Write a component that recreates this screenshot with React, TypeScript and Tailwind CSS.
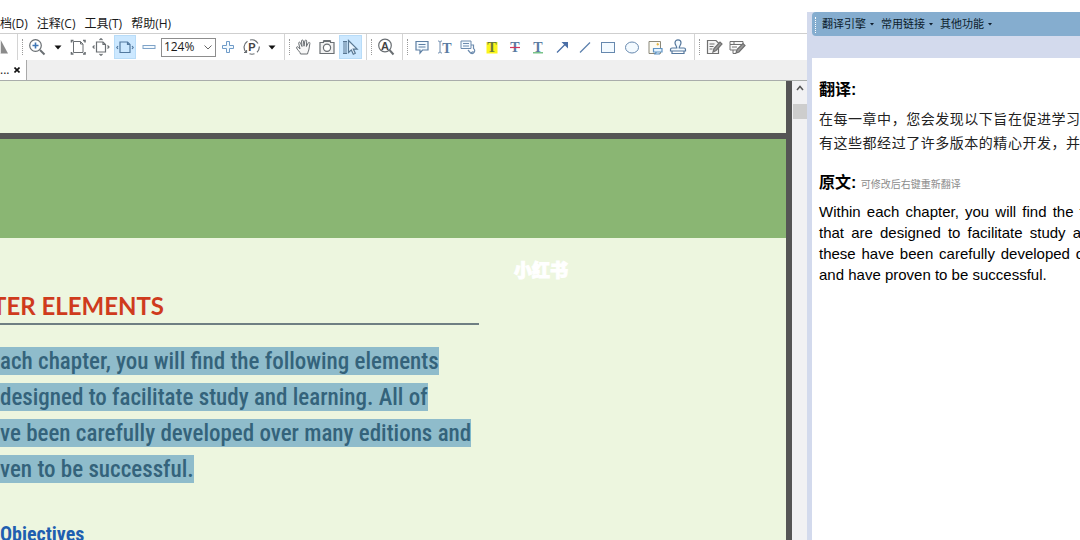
import type { ReactNode } from 'react'

const menus = ['文档(D)', '注释(C)', '工具(T)', '帮助(H)']
const translatorMenus = ['翻译引擎', '常用链接', '其他功能']
const translatedLines = ['在每一章中，您会发现以下旨在促进学习', '有这些都经过了许多版本的精心开发，并']
const selectedLines = [
  'ach chapter, you will find the following elements',
  'designed to facilitate study and learning. All of',
  've been carefully developed over many editions and',
  'ven to be successful.',
]

interface IconProps {
  children: ReactNode
  color?: string
}

function Icon({ children, color = '#6a6f73' }: IconProps) {
  return (
    <svg viewBox="0 0 18 18" className="size-[18px] shrink-0" fill="none" stroke={color} strokeWidth="1.2" aria-hidden="true">
      {children}
    </svg>
  )
}

interface LetterProps {
  children: string
  x?: number
  y?: number
  size?: number
  color?: string
}

function Letter({ children, x = 9, y = 14, size = 14, color = '#5a7ba2' }: LetterProps) {
  return (
    <text x={x} y={y} fontSize={size} textAnchor="middle" fill={color} stroke="none" fontWeight="700" fontFamily="Liberation Serif, serif">
      {children}
    </text>
  )
}

interface ToolProps {
  label: string
  active?: boolean
  children: ReactNode
}

function Tool({ label, active, children }: ToolProps) {
  return (
    <button
      type="button"
      aria-label={label}
      title={label}
      className={active ? 'flex h-6 flex-1 items-center justify-center bg-[#cce8ff] outline outline-[#b8dcf8] -outline-offset-1' : 'flex h-6 flex-1 items-center justify-center'}
    >
      {children}
    </button>
  )
}

function Caret({ label }: { label: string }) {
  return (
    <button type="button" aria-label={label} className="flex h-6 w-4 items-center justify-center">
      <svg viewBox="0 0 8 5" className="h-[5px] w-2" fill="#111"><path d="M0.5 0.5h7L4 4.5z" /></svg>
    </button>
  )
}

function Group({ children, className, last }: { children: ReactNode; className: string; last?: boolean }) {
  return (
    <div className={`flex h-full shrink-0 items-center px-1 ${className} ${last ? '' : 'border-r border-[#d4d4d4]'}`}>
      <span className="mr-0.5 h-4 border-l border-dotted border-[#9a9a9a]" />
      {children}
    </div>
  )
}

function Toolbar() {
  return (
    <div className="flex h-[27px] items-center overflow-hidden border-t border-[#cfcfcf] bg-white">
      <div className="flex h-full w-[18px] shrink-0 items-center border-r border-[#d4d4d4]">
        <button type="button" aria-label="翻转" className="h-6 w-2">
          <svg viewBox="0 0 8 14" className="h-3.5 w-2"><path d="M1 0.5v13h7z" fill="#8a8a8a" /><path d="M0 0v14" stroke="#c9c9c9" /></svg>
        </button>
      </div>

      <Group className="w-[267px] gap-px">
        <Tool label="放大镜">
          <Icon>
            <circle cx="7.5" cy="7.5" r="5.8" />
            <path d="M12 12l4.5 4.5" strokeWidth="2" />
            <path d="M4.5 7.5h6M7.5 4.5v6" stroke="#3f76b5" strokeWidth="1.6" />
          </Icon>
        </Tool>
        <Caret label="缩放选项" />
        <Tool label="实际大小">
          <Icon>
            <path d="M4.500 3.500h7l2.500 2.500v8.500H4.500z" strokeWidth="1" />
            <path d="M11.500 3.500V6H14" strokeWidth="1" />
            <path d="M2.500 4.500v-2h2M14 2.500h2v2M2.500 14v2h2M16 14v2h-2" strokeWidth="1.6" />
          </Icon>
        </Tool>
        <Tool label="适合页面">
          <Icon>
            <path d="M4.500 4h6.500l2.500 2.500V14h-9z" />
            <path d="M11 4v2.500h2.500" />
            <path d="M7.500 2L9 .7 10.500 2M7.500 16L9 17.300 10.500 16M2.500 7.500L1 9l1.500 1.500M15.500 7.500L17 9l-1.500 1.500" />
          </Icon>
        </Tool>
        <Tool label="适合宽度" active>
          <Icon color="#52799f">
            <path d="M4 4h7.500l2.500 2.500V14.500H4z" />
            <path d="M11.500 4v2.500H14" />
            <path d="M2 8L.8 9.500 2 11M16 8l1.200 1.500L16 11" />
          </Icon>
        </Tool>
        <Tool label="缩小">
          <Icon color="#7fa3c8"><rect x="3" y="7.500" width="12" height="3" fill="#f3faff" strokeWidth="1" /></Icon>
        </Tool>
        <label className="relative flex w-[55px] shrink-0 items-center">
          <span className="sr-only">缩放比例</span>
          <select defaultValue="124" className="h-[19px] w-full appearance-none border border-[#8d8d8d] bg-white pl-0.5 text-xs leading-4 text-[#1a1a1a]">
            <option value="100">100%</option>
            <option value="124">124%</option>
            <option value="150">150%</option>
          </select>
          <svg viewBox="0 0 8 5" className="pointer-events-none absolute right-1 h-[5px] w-2" fill="none" stroke="#666"><path d="M.5.5L4 4 7.500.5" /></svg>
        </label>
        <Tool label="增大">
          <Icon color="#6f9bc8"><path d="M7.500 3.500h3v4h4v3h-4v4h-3v-4h-4v-3h4z" fill="#f3faff" strokeWidth="1" /></Icon>
        </Tool>
        <Tool label="旋转视图">
          <Icon>
            <path d="M3.200 14.500A7.300 7.300 0 0 1 4.500 3.200M7 2a7.300 7.300 0 0 1 8 3.500M16.300 8.500A7.300 7.300 0 0 1 14 14.300M11.500 15.800a7.300 7.300 0 0 1-5 0" />
            <path d="M1 14.500h2.500V12" />
            <text x="9" y="13" fontSize="11" fontWeight="700" textAnchor="middle" fill="#444" stroke="none" fontFamily="Liberation Sans, sans-serif">P</text>
          </Icon>
        </Tool>
        <Caret label="旋转选项" />
      </Group>

      <Group className="w-[82px]">
        <Tool label="手形工具">
          <Icon>
            <path d="M5.500 16c0-2-3.800-4.500-4-6.300-.1-1.200 1.300-1.300 2-.3L5 11 3.700 5.300c-.2-1.300 1.200-1.700 1.700-.5L7 8.500 6.500 3c0-1.300 1.700-1.300 1.900 0L9 8.200l.9-5.400c.3-1.200 1.900-.9 1.800.3L11.400 8.500l1.900-3.700c.6-1 1.900-.4 1.600.7L13.800 12c-.3 1.500-1.300 2.500-1.300 4z" fill="#f7f7f7" strokeWidth="1" />
          </Icon>
        </Tool>
        <Tool label="快照">
          <Icon>
            <path d="M2 4.500h3.500V3h7v1.500H16v11H2z" fill="#f2f2f2" />
            <circle cx="9" cy="9.800" r="3.600" fill="#fff" />
            <path d="M5.500 3h7" strokeWidth="2" />
          </Icon>
        </Tool>
        <Tool label="选择文本" active>
          <Icon color="#587792">
            <path d="M2 3.500h4M2 15.500h4M3 3.500v12M5 3.500v12" strokeWidth="1" />
            <path d="M7.500 2.500v12l2.800-2.600 2 4.300 2-.9-2-4.200h3.900z" fill="#e9f5ff" />
          </Icon>
        </Tool>
      </Group>

      <Group className="w-9">
        <Tool label="查找文本">
          <Icon>
            <circle cx="8" cy="7.500" r="6.300" />
            <path d="M12.500 12l4 4.500" strokeWidth="2" />
            <text x="8" y="11.500" fontSize="11" fontWeight="700" textAnchor="middle" fill="#444" stroke="none" fontFamily="Liberation Sans, sans-serif">A</text>
          </Icon>
        </Tool>
      </Group>

      <Group className="w-[292px]">
        <Tool label="附注">
          <Icon color="#5d7fa3">
            <path d="M3 3.500h12v8.500H9.500L7 15v-3H3z" fill="#f3faff" />
            <path d="M5.500 6.500h7M5.500 9h7" strokeWidth="1" />
          </Icon>
        </Tool>
        <Tool label="打字机">
          <Icon color="#6c8bae">
            <path d="M2 3c1.500 0 2 .5 2 1.500v9c0 1-.5 1.500-2 1.500M6 3c-1.500 0-2 .5-2 1.500M6 15c-1.500 0-2-.5-2-1.500" strokeWidth="1" />
            <Letter x={11} y={15}>T</Letter>
          </Icon>
        </Tool>
        <Tool label="标注">
          <Icon color="#6c8bae">
            <path d="M2 3h10v7.500H2z" fill="#f3faff" strokeWidth="1" />
            <path d="M4 5.500h6M4 8h6" strokeWidth="1" />
            <path d="M12 7h2.500v3.500a2.500 2.500 0 1 1-3 4.500M9 12l2.500 3 3-1.500" />
          </Icon>
        </Tool>
        <Tool label="高亮">
          <Icon>
            <rect x="3.500" y="4" width="11" height="11.500" fill="#fbf51b" stroke="none" />
            <Letter color="#6a7840">T</Letter>
          </Icon>
        </Tool>
        <Tool label="删除线">
          <Icon>
            <Letter>T</Letter>
            <path d="M4 9.500h10" stroke="#d3365c" />
          </Icon>
        </Tool>
        <Tool label="下划线">
          <Icon>
            <Letter>T</Letter>
            <path d="M4 14.800h10" stroke="#57b56b" />
          </Icon>
        </Tool>
        <Tool label="箭头">
          <Icon color="#4a6ea6">
            <path d="M4 14.500L12.500 6" />
            <path d="M8.500 4H15v6.500z" fill="#4a6ea6" stroke="none" />
          </Icon>
        </Tool>
        <Tool label="直线">
          <Icon color="#5b80ad"><path d="M4 14.500L14 4.500" /></Icon>
        </Tool>
        <Tool label="矩形">
          <Icon color="#6688ae"><rect x="2.500" y="4.500" width="13" height="10" fill="#f3faff" strokeWidth="1" /></Icon>
        </Tool>
        <Tool label="椭圆">
          <Icon color="#6688ae"><ellipse cx="9" cy="9.500" rx="6.500" ry="5.500" fill="#f3faff" strokeWidth="1" /></Icon>
        </Tool>
        <Tool label="图像">
          <Icon color="#8a8778">
            <path d="M3 3.500h11.500v12H3z" fill="#fbfaf3" strokeWidth="1" />
            <path d="M11 5.500l1.500 1.500" stroke="#e3b341" strokeWidth="2" />
            <path d="M7.500 10.500h8.500v3.500H7.500zM10.500 14l-1.500 2h5" stroke="#5f93c4" fill="#e6f4ff" />
          </Icon>
        </Tool>
        <Tool label="图章">
          <Icon color="#56789d">
            <path d="M7.800 10C7.800 8 6 7 6 4.800a3 3 0 0 1 6 0C12 7 10.200 8 10.200 10H15c1 0 1.500.6 1.500 1.500V13h-15v-1.500C1.500 10.600 2 10 3 10z" fill="#f3faff" />
            <path d="M3 13v2.500h12V13" />
          </Icon>
        </Tool>
      </Group>

      <Group className="w-[58px]" last>
        <Tool label="编辑内容">
          <Icon color="#707070">
            <path d="M2.500 2.500h8.500l2.500 2.500v10.500h-11z" fill="#f6f6f6" />
            <path d="M4.500 6h5M4.500 8.500h4M4.500 11h3" strokeWidth="1" />
            <path d="M8 14l1-3.500 6-6.500 2 2-6 6.500z" fill="#9a9a9a" />
          </Icon>
        </Tool>
        <Tool label="编辑表单">
          <Icon color="#707070">
            <path d="M2 3.500h13v3H2zM2 6.500V12h6M4 9h5M6 3.500v3M5 12v3.500h3" fill="#f6f6f6" strokeWidth="1" />
            <path d="M8 15l1-3.500 6-6 2 2-6 6.500z" fill="#9a9a9a" />
          </Icon>
        </Tool>
      </Group>
    </div>
  )
}

function Reader() {
  return (
    <main className="flex min-w-0 flex-1 flex-col bg-white">
      <nav className="-ml-3 flex h-[33px] items-end gap-[9px] whitespace-nowrap text-xs leading-[18px] text-[#1a1a1a]">
        {menus.map((m) => (
          <button key={m} type="button">{m}</button>
        ))}
      </nav>
      <Toolbar />
      <div className="flex h-[21px] border-b border-[#a9adab] bg-[#efefef]">
        <div className="flex w-[27px] items-center justify-between border-r border-[#a9a9a9] bg-white pr-1.5 text-xs text-[#222]">
          <span>...</span>
          <button type="button" aria-label="关闭">
            <svg viewBox="0 0 6 6" className="size-1.5" stroke="#111" strokeWidth="1.6"><path d="M.5.5l5 5M5.500.5l-5 5" /></svg>
          </button>
        </div>
      </div>

      <div className="flex min-h-0 flex-1">
        <div className="relative min-w-0 flex-1 overflow-hidden border-r-[6px] border-[#555] bg-[#edf6df]">
          <div className="h-[52px]" />
          <div className="h-1.5 bg-[#555]" />
          <div className="h-[99px] bg-[#8ab673]" />
          <article className="flex flex-col whitespace-nowrap pt-[54px]">
            <h1 className="-ml-2 font-['Lato',sans-serif] text-2xl leading-7 font-bold text-[#cf3b1d]">TER ELEMENTS</h1>
            <div className="mt-[3px] h-0.5 w-[479px] bg-[#6f7f83]" />
            <p className="mt-[22px] flex flex-col items-start gap-2 font-['Roboto_Condensed','Roboto',sans-serif] text-[23px] leading-[26px] font-medium text-[#34637b]">
              {selectedLines.map((line) => (
                <span key={line} className="bg-[#8fbccb] pt-0.5">{line}</span>
              ))}
            </p>
            <h2 className="mt-9 font-['Roboto_Condensed','Roboto',sans-serif] text-xl leading-[30px] font-bold text-[#1f5fb0]">Objectives</h2>
          </article>
          <span className="absolute top-[174px] left-[514px] font-['Noto_Sans_CJK_SC',sans-serif] text-lg leading-7 font-black text-white [-webkit-text-stroke:1px_white]">
            小红书
          </span>
        </div>
        <div className="flex w-[15px] flex-col items-center bg-[#f1f1f3] pl-px">
          <button type="button" aria-label="向上滚动" className="flex h-[23px] w-full justify-center pt-1">
            <svg viewBox="0 0 8 6" className="h-1.5 w-2" fill="none" stroke="#555" strokeWidth="1.500"><path d="M1 5l3-3.500L7 5" /></svg>
          </button>
          <div className="h-[15px] w-full bg-[#cdcdcd]" />
        </div>
      </div>
    </main>
  )
}

function Translator() {
  return (
    <aside className="flex w-[273px] shrink-0 flex-col overflow-hidden bg-white pt-3">
      <div className="bg-[#d3daed] pb-[22px] pl-[5px]">
        <nav className="flex h-6 items-center gap-0.5 rounded-l-sm bg-[#85adcf] pt-px pl-[3px] text-[11px] text-[#0c1c2c]">
          <span className="mr-1 h-4 border-l border-dotted border-white" />
          {translatorMenus.map((m) => (
            <button key={m} type="button" className="flex w-[57px] items-center gap-1 whitespace-nowrap">
              {m}
              <svg viewBox="0 0 4 3" className="h-[3px] w-1" fill="#0c1c2c"><path d="M0 0h4L2 2.500z" /></svg>
            </button>
          ))}
        </nav>
      </div>
      <section className="flex-1 border-l-[5px] border-[#d3daed] pt-5 pl-[7px] font-['Liberation_Sans','Noto_Sans_CJK_SC',sans-serif] text-black">
        <h3 className="text-base leading-6 font-bold">翻译:</h3>
        <p className="mt-[5px] text-justify text-sm leading-6 text-[#222] [text-align-last:justify]">
          {translatedLines.map((line) => (
            <span key={line} className="block">{line}</span>
          ))}
        </p>
        <h3 className="mt-4 text-base leading-6 font-bold">
          原文: <small className="text-[10px] font-normal text-[#8c8c8c]">可修改后右键重新翻译</small>
        </h3>
        <p className="mt-1 w-[386px] text-justify text-[15px] leading-[21px]">
          Within each chapter, you will find the following elements that are designed to facilitate study and learning. All of
          these have been carefully developed over many editions and have proven to be successful.
        </p>
      </section>
    </aside>
  )
}

export default function App() {
  return (
    <div className="flex h-screen overflow-hidden bg-white font-['Open_Sans','Noto_Sans_CJK_SC',sans-serif]">
      <Reader />
      <Translator />
    </div>
  )
}
